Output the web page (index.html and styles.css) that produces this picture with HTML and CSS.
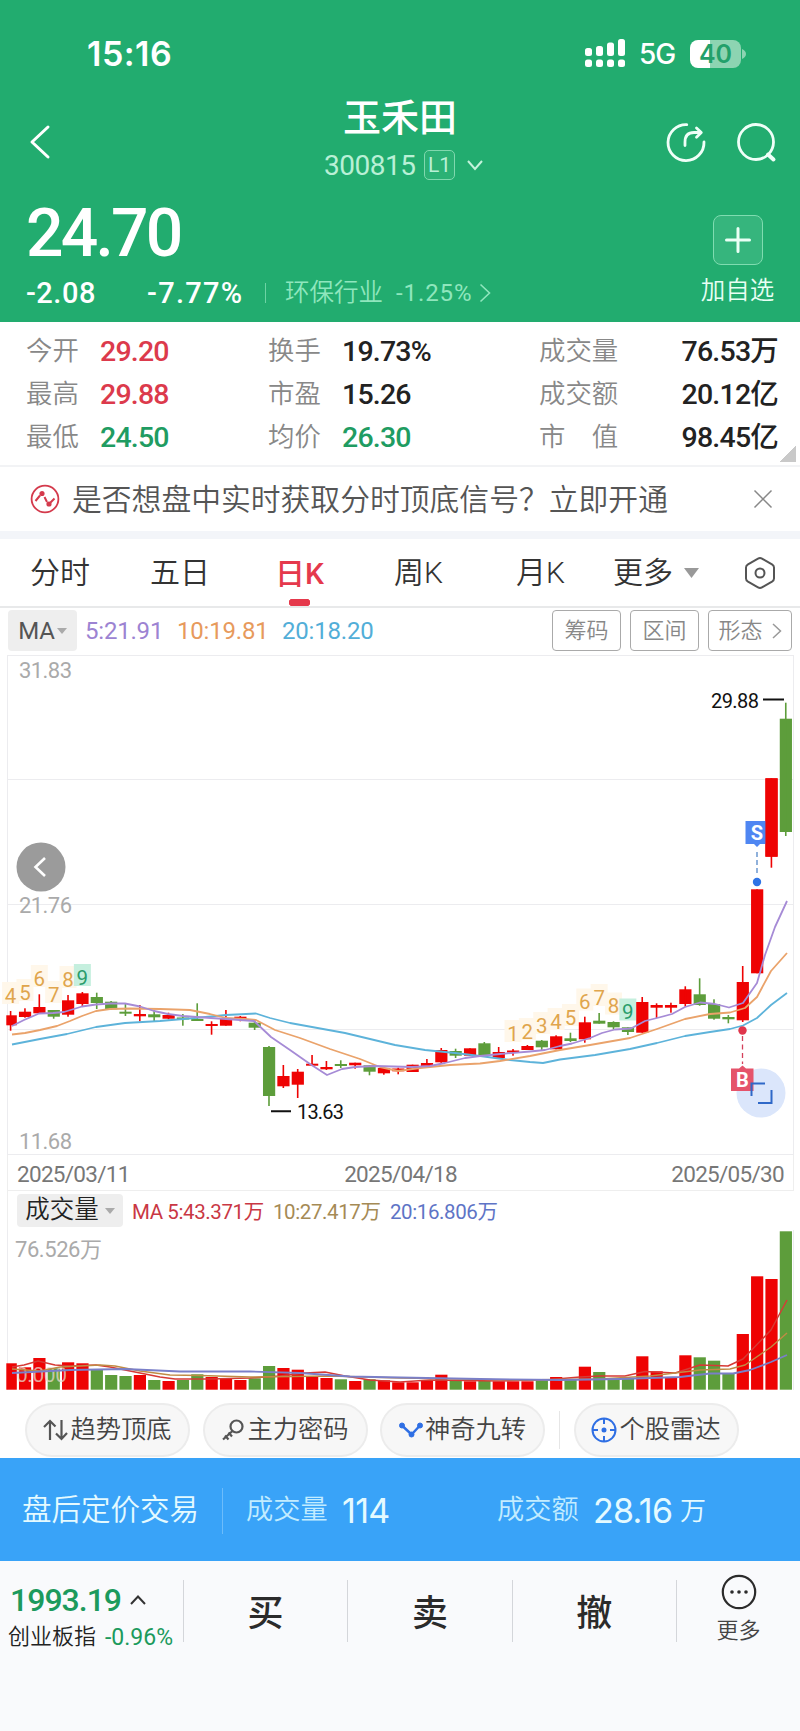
FILE: index.html
```html
<!DOCTYPE html>
<html lang="zh-CN">
<head>
<meta charset="utf-8">
<title>玉禾田 300815</title>
<link rel="stylesheet" href="styles.css">
</head>
<body>
<header class="top">
  <div class="status">
    <span class="clock">15:16</span>
    <svg class="signal" width="40" height="29" viewBox="0 0 40 29" fill="#fff"><rect x="0" y="9" width="7" height="8" rx="2.5"/><rect x="11" y="7" width="7" height="10" rx="2.5"/><rect x="22" y="3.500" width="7" height="13.500" rx="2.500"/><rect x="33" y="0" width="7" height="17" rx="2.500"/><rect x="0" y="20.500" width="7" height="7.500" rx="2.500"/><rect x="11" y="20.500" width="7" height="7.500" rx="2.500"/><rect x="22" y="20.500" width="7" height="7.500" rx="2.500"/><rect x="33" y="20.500" width="7" height="7.500" rx="2.500"/></svg>
    <span class="net">5G</span>
    <span class="battery">40</span><svg class="cap" width="4" height="10" viewBox="0 0 4 10"><path d="M0 0Q4 2 4 5T0 10Z" fill="#8dd4b2"/></svg>
  </div>
  <div class="nav">
    <svg class="back" width="22" height="36" viewBox="0 0 22 36"><path d="M19 3L3 18L19 33" fill="none" stroke="#fff" stroke-width="3" stroke-linecap="round" stroke-linejoin="round"/></svg>
    <div class="title">
      <h1>玉禾田</h1>
      <div class="code"><span class="num">300815</span><span class="level">L1</span><svg width="18" height="12" viewBox="0 0 18 12"><path d="M2 2L9 10L16 2" fill="none" stroke="#c4f3dc" stroke-width="2"/></svg></div>
    </div>
    <div class="actions">
      <svg width="42" height="42" viewBox="0 0 42 42" fill="none" stroke="#effff8" stroke-width="2.800" stroke-linecap="round" stroke-linejoin="round"><path d="M21.800 3.600A18 18 0 1 0 39 21"/><path d="M20 24.500V21Q20 11.500 29 11.500H36M31.500 7L36.300 11.500L31.500 16.300"/></svg>
      <svg width="42" height="42" viewBox="0 0 42 42" fill="none" stroke="#effff8" stroke-width="2.800" stroke-linecap="round"><circle cx="21" cy="21" r="17.500"/><path d="M33 33.500L38.500 38.500" stroke-width="4"/></svg>
    </div>
  </div>
  <div class="quote">
    <div class="figures">
      <div class="price">24.70</div>
      <div class="change"><span class="diff">-2.08</span><span class="pct">-7.77%</span><i></i><span class="sector">环保行业</span><span class="sector-pct">-1.25%</span><svg width="12" height="20" viewBox="0 0 12 20"><path d="M1.500 1.500L10.500 10L1.500 18.500" fill="none" stroke="#8fe6bd" stroke-width="1.600"/></svg></div>
    </div>
    <div class="add">
      <div class="plus"><svg width="26" height="26" viewBox="0 0 26 26"><path d="M13 1.500V24.500M1.500 13H24.500" stroke="#eafff5" stroke-width="3" stroke-linecap="round"/></svg></div>
      <span>加自选</span>
    </div>
  </div>
</header>

<section class="stats">
  <span>今开</span><b class="up">29.20</b><span>换手</span><b>19.73%</b><span>成交量</span><b class="right">76.53万</b>
  <span>最高</span><b class="up">29.88</b><span>市盈</span><b>15.26</b><span>成交额</span><b class="right">20.12亿</b>
  <span>最低</span><b class="down">24.50</b><span>均价</span><b class="down">26.30</b><span>市&#12288;值</span><b class="right">98.45亿</b>
</section>

<section class="notice">
  <svg width="30" height="30" viewBox="0 0 30 30" fill="none" stroke="#d43a4c" stroke-width="1.800"><circle cx="15" cy="15" r="13.400"/><path d="M5.500 17L10 11.500M14.500 13L17 18M20.500 18.500L24.500 14.500" stroke-width="2"/><circle cx="12" cy="9.500" r="1.700" fill="#d43a4c"/><circle cx="19" cy="20" r="1.700" fill="#d43a4c"/></svg>
  <p>是否想盘中实时获取分时顶底信号？立即开通</p>
  <svg width="20" height="20" viewBox="0 0 20 20"><path d="M1.500 1.500L18.500 18.500M18.500 1.500L1.500 18.500" stroke="#888" stroke-width="1.500"/></svg>
</section>

<nav class="tabs">
  <span class="t1">分时</span><span class="t2">五日</span><span class="t3 active">日K</span><span class="t4">周K</span><span class="t5">月K</span><span class="t6">更多</span>
  <svg class="tri" width="15" height="10" viewBox="0 0 15 10"><path d="M0 0H15L7.500 10Z" fill="#999"/></svg>
  <svg width="30" height="34" viewBox="0 0 30 34" fill="none" stroke="#555" stroke-width="2"><path d="M13 2.600Q15 1.500 17 2.600L27 8.300Q29 9.500 29 11.500V22.500Q29 24.500 27 25.700L17 31.400Q15 32.500 13 31.400L3 25.700Q1 24.500 1 22.500V11.500Q1 9.500 3 8.300Z"/><circle cx="15" cy="17" r="4.500"/></svg>
</nav>

<section class="ma">
  <span class="pick">MA<i class="caret"></i></span>
  <span class="m5">5:21.91</span><span class="m10">10:19.81</span><span class="m20">20:18.20</span>
  <div class="tools"><span>筹码</span><span>区间</span><span class="wide">形态<svg width="10" height="16" viewBox="0 0 10 16"><path d="M1 1L8.500 8L1 15" fill="none" stroke="#999" stroke-width="1.500"/></svg></span></div>
</section>

<svg class="kline" id="kline" width="800" height="500" viewBox="0 655 800 500"></svg>
<div class="dates"><span>2025/03/11</span><span>2025/04/18</span><span>2025/05/30</span></div>
<section class="volhead">
  <span class="pick">成交量<i class="caret"></i></span>
  <span class="v5">MA 5:43.371万</span><span class="v10">10:27.417万</span><span class="v20">20:16.806万</span>
</section>
<svg class="volume" id="volume" width="800" height="161" viewBox="0 1230 800 161"></svg>

<section class="chips">
  <span class="chip"><svg width="25" height="22" viewBox="0 0 25 22" fill="none" stroke="#555" stroke-width="2.200"><path d="M7 21V2M1 8L7 2L12.500 7.500M18.500 1V20M13 14.500L18.500 20L24 14"/></svg>趋势顶底</span>
  <span class="chip"><svg width="24" height="24" viewBox="0 0 24 24" fill="none" stroke="#555" stroke-width="2.200"><circle cx="15.500" cy="8.500" r="6"/><path d="M11.500 13L2 21.500M4 17.500L7.500 21.500M7.500 14.500L11 18.500"/></svg>主力密码</span>
  <span class="chip"><svg width="24" height="18" viewBox="0 0 24 18" fill="#2f6fe4" stroke="#2f6fe4"><path d="M3 4.500L12.500 13.500L21 4.500" fill="none" stroke-width="2.500"/><circle cx="3" cy="4.500" r="2.500"/><circle cx="12.500" cy="13.500" r="2.500"/><circle cx="21" cy="4.500" r="2.500"/></svg>神奇九转</span>
  <i></i>
  <span class="chip"><svg width="26" height="26" viewBox="0 0 26 26" fill="none" stroke="#2f6fe4" stroke-width="2"><circle cx="13" cy="13" r="11.500"/><circle cx="13" cy="13" r="1.500" fill="#2f6fe4"/><path d="M13 1V7M13 19V25M1 13H7M19 13H25"/></svg>个股雷达</span>
</section>

<section class="after">
  <span class="name">盘后定价交易</span><i></i>
  <span class="lbl">成交量</span><span class="val">114</span>
  <span class="lbl second">成交额</span><span class="val">28.16</span><span class="unit">万</span>
</section>

<footer class="bar">
  <div class="index">
    <div class="points">1993.19<svg width="16" height="10" viewBox="0 0 16 10"><path d="M1 9L8 1.500L15 9" fill="none" stroke="#333" stroke-width="2"/></svg></div>
    <div class="idx">创业板指<span>-0.96%</span></div>
  </div>
  <span class="act">买</span><span class="act">卖</span><span class="act">撤</span>
  <div class="more"><svg width="36" height="36" viewBox="0 0 36 36"><circle cx="18" cy="18" r="16.200" fill="none" stroke="#2b2b2b" stroke-width="2.200"/><g fill="#2b2b2b"><circle cx="11" cy="18" r="1.800"/><circle cx="18" cy="18" r="1.800"/><circle cx="25" cy="18" r="1.800"/></g></svg><span>更多</span></div>
</footer>
<script src="chart.js"></script>
</body>
</html>
```
FILE: styles.css
```css
* { box-sizing: border-box; }
body { margin: 0; width: 800px; height: 1731px; background: #fff; color: #222; font-family: Roboto, "Noto Sans CJK SC", sans-serif; line-height: 1; overflow: hidden; white-space: nowrap; }
svg { display: block; flex: none; }
i { font-style: normal; }
h1, p { margin: 0; }

.top { height: 322px; background: #22ac6f; color: #fff; display: flex; flex-direction: column; }
.status { height: 92px; padding: 15px 0 0 87px; display: flex; align-items: center; }
.clock { width: 498px; font: 600 34px/40px Inter, sans-serif; letter-spacing: 0.5px; }
.net { margin-left: 14px; width: 51px; font: 500 28px/34px Inter, sans-serif; letter-spacing: -1px; }
.battery { width: 51px; height: 28px; border-radius: 8px; background: linear-gradient(90deg, #fff 0 20px, #8dd4b2 20px); color: #22a06a; font: 600 25px/28px Inter, sans-serif; text-align: center; }
.cap { margin-left: 1px; }
.nav { height: 100px; padding-left: 29px; display: flex; align-items: flex-start; }
.back { margin-top: 32px; }
.title { width: 249px; margin-left: 227px; padding-left: 46px; }
.title h1 { height: 50px; margin-left: 19px; font-size: 38px; font-weight: 500; line-height: 52px; }
.code { display: flex; align-items: center; height: 44px; padding-top: 1px; color: #b9f0d6; }
.num { width: 100px; font-size: 28px; line-height: 32px; letter-spacing: -0.5px; padding-top: 2px; }
.level { width: 31px; height: 30px; border: 1px solid #80d8ae; border-radius: 5px; font-size: 21px; line-height: 29px; text-align: center; margin-right: 11px; background: #2cb175; }
.actions { display: flex; gap: 28px; margin-left: 138px; padding-top: 29px; }
.quote { display: flex; padding-left: 26px; }
.figures { width: 675px; }
.price { height: 80px; font-size: 66px; line-height: 83px; font-weight: 500; letter-spacing: -2.8px; }
.change { height: 42px; display: flex; align-items: center; }
.diff { width: 121px; font-size: 29px; font-weight: 500; letter-spacing: 0.5px; }
.pct { width: 118px; font-size: 29px; font-weight: 500; letter-spacing: 1.3px; }
.change i { width: 1px; height: 20px; background: #6dd3a4; margin-right: 19px; }
.sector { width: 111px; font-size: 24.5px; font-weight: 350; color: #8fe6bd; }
.sector-pct { width: 83px; font-size: 24px; letter-spacing: 0.9px; color: #8fe6bd; }
.add { width: 73px; padding-top: 23px; display: flex; flex-direction: column; align-items: center; gap: 14px; font-size: 24.5px; color: #e8fff4; font-weight: 350; }
.plus { width: 50px; height: 50px; border: 1px solid #7fdcb0; border-radius: 8px; background: #36b57d; display: grid; place-items: center; }

.stats { height: 145px; padding: 8px 22px 0 26px; border-bottom: 2px solid #f2f3f5; display: grid; grid-template-columns: 74px 168px 74px 197px 100px 1fr; grid-auto-rows: 43px; align-items: center; font-size: 26.4px; color: #888; background: linear-gradient(135deg, transparent 50%, #c9c9c9 50%) 780px 124px / 16px 16px no-repeat; }
.stats span { font-weight: 350; }
.stats b { padding-top: 2px; font-size: 28.5px; font-weight: 500; letter-spacing: -0.8px; color: #222; }
.stats .up { color: #dc3a4c; }
.stats .down { color: #1f9c62; }
.stats .right { text-align: right; }

.notice { height: 72px; padding-left: 30px; border-bottom: 8px solid #f3f5f9; display: flex; align-items: center; }
.notice p { width: 693px; padding: 1px 0 0 12px; font-size: 29.8px; font-weight: 350; color: #555; }
.tabs { height: 69px; border-bottom: 2px solid #e8e9ea; padding: 1px 0 0 30px; display: flex; align-items: center; font-size: 30px; font-weight: 350; color: #333; }
.tabs .t1 { width: 120px; } .tabs .t2 { width: 125px; } .tabs .t3 { width: 119px; } .tabs .t4 { width: 122px; } .tabs .t5 { width: 97px; } .tabs .t6 { width: 71px; }
.tabs .active { height: 66px; color: #e5394c; font-weight: 500; line-height: 67px; background: radial-gradient(circle at 3.5px 3.5px, #e5394c 3.5px, transparent 4px) 14px 59px / 7px 7px no-repeat, linear-gradient(#e5394c, #e5394c) 17px 59px / 15px 7px no-repeat, radial-gradient(circle at 3.5px 3.5px, #e5394c 3.5px, transparent 4px) 28px 59px / 7px 7px no-repeat; }
.tri { margin-right: 46px; }

.ma { height: 47px; padding: 2px 8px 4px; display: flex; align-items: center; font-size: 24px; letter-spacing: -0.2px; }
.ma > span { padding-top: 1px; }
.pick { background: #eee; border-radius: 4px; display: flex; align-items: center; justify-content: center; }
.ma .pick { width: 69px; height: 41px; margin-right: 8px; color: #555; }
.caret { border: 5px solid transparent; border-top: 6px solid #aaa; border-bottom: 0; margin-left: 2px; }
.m5 { width: 92px; color: #9c83d2; } .m10 { width: 105px; color: #e79a5c; } .m20 { width: 100px; color: #52aed8; }
.tools { display: flex; gap: 9px; margin-left: auto; }
.tools span { width: 69px; height: 41px; border: 1px solid #aaa; border-radius: 4px; font-size: 22px; font-weight: 350; color: #888; letter-spacing: 0; display: flex; align-items: center; justify-content: center; gap: 9px; }
.tools .wide { width: 84px; }
.dates { height: 36px; margin: 0 6px 0 7px; padding: 3px 9px 0; border: solid #eee; border-width: 0 1px 1px; display: flex; justify-content: space-between; align-items: center; font-size: 22.5px; letter-spacing: -0.7px; color: #777; }
.volhead { height: 39px; margin-left: 7px; padding-left: 9px; border-left: 1px solid #eee; display: flex; align-items: center; font-size: 20.5px; letter-spacing: -0.4px; }
.volhead > span { padding-top: 3px; }
.volhead .pick { width: 106px; height: 33px; margin-right: 9px; padding-top: 0; font-size: 24.5px; font-weight: 350; letter-spacing: 0; }
.volhead .caret { margin-left: 6px; }
.v5 { width: 141px; color: #c93744; } .v10 { width: 117px; color: #a58a55; } .v20 { color: #5e74c6; }
.kline text, .volume text { font-family: Roboto, "Noto Sans CJK SC", sans-serif; }

.chips { height: 67px; padding: 12px 0 2px 25px; display: flex; align-items: center; }
.chip { width: 165px; height: 54px; padding-top: 1px; border: 2px solid #ececec; border-radius: 27px; background: #f7f7f7; margin-right: 12.500px; display: flex; align-items: center; justify-content: center; gap: 2px; font-size: 25.3px; font-weight: 350; color: #444; }
.chips i { width: 1px; height: 38px; margin: 0 14px 0 1px; background: #e6e6e6; }
.after { height: 103px; padding: 2px 0 0 22px; background: #39a3f8; color: #e4faff; display: flex; align-items: center; }
.after .name { width: 200px; font-size: 29.5px; font-weight: 350; }
.after i { width: 1px; height: 46px; background: #6cbcfb; margin-right: 23px; }
.lbl { width: 96px; font-size: 27.2px; font-weight: 350; color: #c2ecff; }
.val { font: 400 34px/40px Inter, sans-serif; letter-spacing: -0.7px; width: 155px; }
.second + .val { width: 87px; }
.unit { font-size: 26px; font-weight: 350; }

.bar { height: 170px; background: #f9fafc; display: flex; padding-top: 19px; }
.index { width: 183px; padding-left: 8px; }
.points { display: flex; align-items: center; gap: 9px; height: 40px; padding-left: 2px; font-size: 32px; font-weight: 500; letter-spacing: -1px; color: #1c9a5d; }
.idx { height: 34px; display: flex; align-items: center; gap: 9px; font-size: 22px; font-weight: 350; }
.idx span { font-size: 23px; font-weight: 400; color: #1c9a5d; }
.act { width: 164.5px; height: 62px; border-left: 1px solid #d4d6da; text-align: center; font-size: 36px; line-height: 68px; font-weight: 500; color: #2b2b2b; }
.more { width: 124px; height: 62px; border-left: 1px solid #d4d6da; display: flex; flex-direction: column; align-items: center; gap: 10px; font-size: 22px; font-weight: 350; color: #444; }
.more svg { margin-top: -6px; }
```
FILE: chart.js
```js
// direction, body top, body bottom, wick top, wick bottom, volume bar top
const bars = [
  ['r',1015.3,1025.3,1011,1030.7,1363.3],['r',1011.7,1017,1008.3,1017.7,1367.3],['r',1007,1013.3,994.3,1014,1358],
  ['g',1010,1016.7,1010,1018.7,1368.3],['r',1000.3,1014.7,995,1016.7,1362.3],['r',993.3,1004,992,1006,1363.3],
  ['g',997,1003,992.7,1009,1369],['g',1001.7,1009.3,1001,1009.7,1375],['g',1011.7,1013.7,1004,1016,1376],
  ['r',1014,1016.3,1005,1021.3,1375],['g',1014.3,1017.3,1010.3,1021.3,1380],['r',1015,1018.7,1012.7,1019.3,1381],
  ['g',1017.5,1019.5,1014,1025.7,1380],['g',1019,1021,1003.3,1021,1374.3],['r',1024,1026,1021.3,1034.7,1377],
  ['r',1018.7,1025.7,1010,1025.7,1378.3],['r',1016.7,1019,1016,1021.3,1380],['g',1022.7,1027.7,1019.3,1030,1378.3],
  ['g',1047,1096,1046,1106,1366],['r',1076,1086.3,1065,1088,1368],['r',1071.7,1084.7,1069,1098,1369.7],
  ['r',1063.7,1065.7,1055,1066,1376],['r',1067,1069.3,1061,1070,1378],['g',1064,1066,1060.3,1068,1379.3],
  ['r',1062.7,1065.3,1062.7,1068.7,1381],['g',1065.3,1071.7,1065.3,1075.3,1379.3],['r',1068,1073.3,1067.3,1074.7,1380.3],
  ['r',1068.5,1071.3,1067.7,1074.3,1382.3],['r',1064.7,1072,1064.7,1072,1382.3],['r',1063,1066.3,1059,1067,1380.3],
  ['r',1050,1062.3,1048,1063,1374.7],['g',1051,1055.7,1048.7,1058,1380.7],['r',1048.3,1055.7,1048.3,1055.7,1381.3],
  ['g',1043.3,1055,1042,1055,1380.7],['r',1052,1058,1047,1058,1381.3],['r',1050.5,1052.5,1049,1055.7,1381.3],
  ['r',1046,1050,1045,1050,1381.3],['g',1040.7,1047.3,1040,1051,1380.3],['r',1036.3,1049.3,1035.3,1049.3,1377],
  ['g',1038.3,1041,1032.7,1042,1380],['r',1022.3,1039.3,1016.7,1042.7,1366.7],['g',1020.7,1023.7,1013,1023.7,1372],
  ['g',1022,1027.3,1021.3,1029.3,1378.7],['g',1027.3,1032,1027.3,1035,1378.7],['r',1002,1032.7,997,1032.7,1356.3],
  ['r',1005,1007.7,1003.3,1018,1371.3],['r',1005,1007.7,1002.7,1012.7,1377],['r',989.3,1004,986.3,1006.7,1355.3],
  ['g',994.3,1005,978.3,1005.7,1357.3],['g',1004,1018.7,999.3,1019.7,1360.7],['g',1017,1019.3,1015,1023.3,1374],
  ['r',982,1020.3,966,1022,1334],['r',889.3,973.3,889.3,973.3,1276.3],['r',778.3,856.7,778.3,867.7,1279],
  ['g',718.7,832,702.7,836,1231.3]
];
const cx = i => 10.6 + 14.355 * i;
const fill = { r: '#ee0303', g: '#5d9d3b' };
const line = (pts, color, w) => `<polyline points="${pts}" fill="none" stroke="${color}" stroke-width="${w}" stroke-linejoin="round"/>`;
// the first bar is cut off by the plot's left edge
const left = i => Math.max(6.3, cx(i) - 6);
const bar = (i, y, h) => `<rect x="${left(i)}" y="${y}" width="${cx(i) + 6.2 - left(i)}" height="${h}"/>`;

let k = '<g stroke="#ececef" stroke-width="1">';
for (const y of [655.5, 779.5, 904.5, 1029.5, 1154.5]) k += `<path d="M7 ${y}H794"/>`;
k += '<path d="M7.500 655V1155M793.500 655V1155"/></g>';

// nine-turn sequence labels
const marks = [[4,0,995],[5,1,992],[6,2,978],[7,3,994],[8,4,979],[9,5,977],[1,35,1033],[2,36,1031],[3,37,1025],[4,38,1021],[5,39,1017],[6,40,1001.5],[7,41,997],[8,42,1005.5],[9,43,1011.5]];
for (const [n, i, y] of marks) k += `<rect x="${cx(i) - 8.5}" y="${y - 13}" width="17" height="22" fill="${n === 9 ? '#c5efde' : '#fff7ea'}"/>`;
for (const [n, i, y] of marks) k += `<text x="${cx(i)}" y="${y + 7.5}" text-anchor="middle" font-size="20.5" fill="${n === 9 ? '#2a9d6c' : '#e0a54c'}">${n}</text>`;

bars.forEach(([d, t, b, wt, wb], i) => {
  k += `<g fill="${fill[d]}">${bar(i, t, b - t)}<rect x="${cx(i) - 0.8}" y="${wt}" width="1.600" height="${wb - wt}"/></g>`;
});
k += line('12,1044.5 40,1039 67,1034 96,1027 125,1023 160,1021 195,1018 226,1015 256,1013.5 270,1018 290,1023 345,1033 395,1045 425,1050 455,1053 480,1056 510,1060 530,1062 543,1063 560,1059.5 595,1055 630,1049 657,1043 685,1036 710,1032 730,1029 743,1025.5 757,1018 771,1005 787,993', '#5db3da', 1.8);
k += line('12,1034.5 25,1033 40,1030 57,1026 70,1021 82,1016 96,1011 110,1009 130,1008.5 160,1009 190,1010 210,1014 226,1018 245,1019 256,1020 275,1030 300,1038 330,1049 360,1059 380,1067 398,1071 420,1068 450,1065 480,1063.5 500,1061 530,1056 560,1050 590,1045 630,1038 657,1029 685,1019 710,1014 730,1012.5 745,1008 757,997 771,971 787,953', '#eaa36b', 1.8);
k += line('12,1026 24,1020 39,1013.5 53,1013 64,1012 82,1006.5 96,1004.5 110,1003.5 125,1003.5 140,1006.5 154,1011 168,1014 183,1016 211,1018 226,1019 254,1021 271,1037 290,1050 310,1064 327,1075 342,1069 355,1067 375,1066 412,1067 430,1066 445,1063 465,1058 480,1056 500,1054 530,1051.5 545,1050 560,1046 572,1043.5 590,1038 602,1033 615,1029.5 631,1028.5 645,1021 657,1018 672,1014 685,1007 700,1002.5 715,1004 729,1007.5 743,1003 757,983 765,955 775,927 787,901', '#a68bd6', 1.8);

const axis = (y, s) => `<text x="19" y="${y}" font-size="22" fill="#aaa" textLength="53">${s}</text>`;
k += axis(677.5, '31.83') + axis(913, '21.76') + axis(1148.5, '11.68');
k += '<g fill="#111" font-size="20"><text x="711" y="707.500" textLength="48">29.88</text><text x="297" y="1119" textLength="47">13.63</text></g>';
k += '<path d="M763 699.500H784M271 1111.300H291" stroke="#111" stroke-width="2"/>';

// sell marker, partly behind the next candle
k += '<path d="M745.500 821H768.500V844H760L757 847L754 844H745.500Z" fill="#4f86f2"/><path d="M757 852V876" stroke="#5588c8" stroke-width="1.300" stroke-dasharray="5 3"/><circle cx="757" cy="882" r="4.200" fill="#2f74e6"/><text x="757" y="839.500" text-anchor="middle" font-size="20" font-weight="700" fill="#fff">S</text>';
k += `<g fill="${fill.r}">${bar(53, 778.3, 78.4)}</g>`;
// buy marker and expand button
k += '<circle cx="761" cy="1093" r="24.500" fill="#dbe6fb"/>';
k += '<path d="M731 1068.500H739L742.500 1065.500L746 1068.500H753.500V1091H731Z" fill="#e5536b"/><path d="M742.500 1036V1064" stroke="#d4405a" stroke-width="1.300" stroke-dasharray="5 3.500"/><circle cx="742.500" cy="1030.500" r="4.200" fill="#e0354b"/><text x="742.500" y="1087" text-anchor="middle" font-size="20" font-weight="700" fill="#fff">B</text>';
k += '<path d="M751.500 1096V1083.500H765M758 1103H771.500V1090" fill="none" stroke="#2f68c8" stroke-width="2"/>';
// collapse button
k += '<circle cx="41" cy="867" r="24.500" fill="#9b9b9b"/><path d="M45 858L35.500 867L45 876" fill="none" stroke="#fff" stroke-width="2.600"/>';
document.getElementById('kline').innerHTML = k;

let v = '<path d="M7.500 1230V1390M793.500 1230V1390" stroke="#ececef"/>';
bars.forEach(([d, , , , , t], i) => { v += `<g fill="${fill[d]}">${bar(i, t, 1389.7 - t)}</g>`; });
v += '<text x="15" y="1256.500" font-size="22" fill="#aaa" textLength="87">76.526万</text><text x="16" y="1382" font-size="21" fill="#e6d8cc" fill-opacity=".75" textLength="51">0.000</text>';
v += line('12,1367 24,1365 38,1361 55,1365 70,1366 96,1365 110,1367 140,1373 160,1377 175,1379 210,1379 250,1378 280,1376 305,1373 325,1372 345,1376 370,1380 400,1382 430,1380 500,1381 550,1379.5 580,1377 600,1376 625,1376 645,1371.500 675,1373 700,1365 728,1366 743,1359 771,1330 787,1300', '#d63a35', 1.5);
v += line('12,1369 40,1371 60,1367 100,1365 115,1366 140,1371 170,1375 200,1375.500 250,1377 330,1376 400,1378 520,1380 600,1379 650,1376 700,1370 730,1369 745,1365 771,1347 787,1333', '#c08b45', 1.4);
v += line('12,1373 70,1370 125,1369 180,1371.500 250,1371.500 300,1373 350,1376.500 400,1377.500 480,1379 560,1380 620,1379 680,1377 710,1373.500 733,1373.500 750,1370 771,1362 787,1355', '#7a7fc8', 1.8);
document.getElementById('volume').innerHTML = v;
```
